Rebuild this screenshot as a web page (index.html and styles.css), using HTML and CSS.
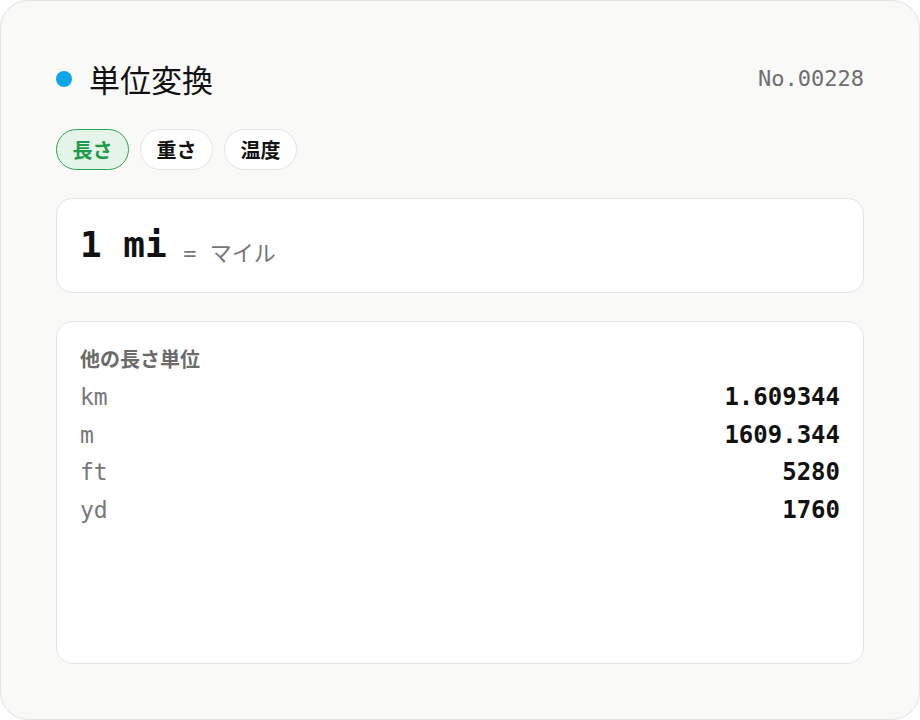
FILE: index.html
```html
<!doctype html>
<html lang="ja">
<head>
    <meta charset="utf-8">
    <title>単位変換</title>
    <link rel="stylesheet" href="styles.css">
</head>
<body>

<div class="card">
    <div class="header">
        <span class="dot"></span>
        <h1 class="title">単位変換</h1>
        <span class="serial">No.00228</span>
    </div>

    <div class="tabs">
        <button class="tab active">長さ</button>
        <button class="tab">重さ</button>
        <button class="tab">温度</button>
    </div>

    <div class="input-box">
        <span class="amount">1 mi</span>
        <span class="unit-name">= マイル</span>
    </div>

    <div class="results">
        <h2 class="results-title">他の長さ単位</h2>
        <div class="row"><span class="unit">km</span><span class="value">1.609344</span></div>
        <div class="row"><span class="unit">m</span><span class="value">1609.344</span></div>
        <div class="row"><span class="unit">ft</span><span class="value">5280</span></div>
        <div class="row"><span class="unit">yd</span><span class="value">1760</span></div>
    </div>
</div>

</body>
</html>
```

FILE: styles.css
```css
html,
body {
    margin: 0;
    height: 100%;
}

body {
    font-family: "Noto Sans CJK JP", "Noto Sans", sans-serif;
    color: #111;
}

.card {
    box-sizing: border-box;
    height: 100%;
    display: flex;
    flex-direction: column;
    gap: 28px;
    padding: 55px 55px 55px;
    background: #f9f9f8;
    border: 1px solid #e2e2e2;
    border-radius: 28px;
}

.header {
    display: flex;
    align-items: center;
    height: 45px;
}

.dot {
    width: 16px;
    height: 16px;
    border-radius: 50%;
    background: #0ea5e9;
    margin-right: 17px;
}

.title {
    margin: 0;
    font-size: 31px;
    font-weight: 400;
    line-height: 45px;
}

.serial {
    margin-left: auto;
    font-family: "DejaVu Sans Mono", monospace;
    font-size: 22px;
    color: #6e6e6e;
}

.tabs {
    display: flex;
    gap: 11px;
}

.tab {
    height: 41px;
    padding: 0 15.5px;
    font-family: inherit;
    font-size: 20px;
    font-weight: 700;
    color: #111;
    background: #fff;
    border: 1px solid #e4e4e4;
    border-radius: 21px;
}

.tab.active {
    color: #1f9a48;
    background: #e4f4e9;
    border-color: #2aa452;
}

.input-box {
    box-sizing: border-box;
    height: 95px;
    padding: 24px 23px 0;
    line-height: 44px;
    white-space: nowrap;
    background: #fff;
    border: 1px solid #e4e4e4;
    border-radius: 16px;
}

.amount {
    font-family: "DejaVu Sans Mono", monospace;
    font-size: 36px;
    font-weight: 700;
}

/* "=" comes from the mono face, the katakana fall back to the CJK face */
.unit-name {
    margin-left: 13px;
    vertical-align: -4px;
    font-family: "DejaVu Sans Mono", "Noto Sans CJK JP", monospace;
    font-size: 22px;
    color: #777;
}

.results {
    flex: 1;
    padding: 22px 23px;
    background: #fff;
    border: 1px solid #e4e4e4;
    border-radius: 16px;
}

.results-title {
    margin: 0 0 6px;
    font-size: 20px;
    font-weight: 700;
    line-height: 29px;
    color: #6b6b6b;
}

.row {
    display: flex;
    justify-content: space-between;
    font-family: "DejaVu Sans Mono", monospace;
    font-size: 24px;
    line-height: 37.6px;
}

.unit {
    font-size: 23px;
    color: #777;
}

.value {
    font-weight: 700;
    color: #111;
}
```
